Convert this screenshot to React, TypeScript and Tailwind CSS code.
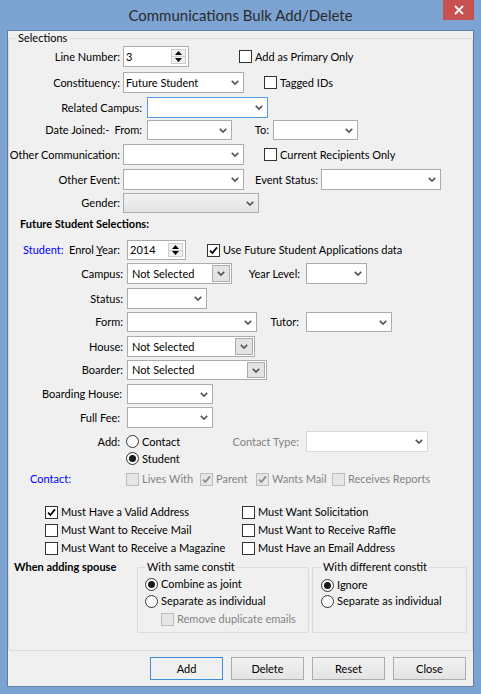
import React from 'react';

type Kind = 'plain' | 'focus' | 'button' | 'inner' | 'disabled';

function Chevron() {
  return (
    <svg width="8" height="5" viewBox="0 0 8 5" className="block">
      <path d="M0.8 0.8 L4 4 L7.2 0.8" fill="none" stroke="#555555" strokeWidth="1.7" />
    </svg>
  );
}

function Label({ cls, children }: { cls: string; children: React.ReactNode }) {
  return <span className={`flex justify-end whitespace-nowrap shrink-0 ${cls}`}>{children}</span>;
}

function Combo({ cls, value = '', kind = 'plain' }: { cls: string; value?: string; kind?: Kind }) {
  const border = kind === 'focus' ? 'border-[#569de5]' : kind === 'disabled' ? 'border-[#d9d9d9]' : 'border-[#acacac]';
  const bg = kind === 'button' ? 'bg-linear-to-b from-[#f2f2f2] to-[#e3e3e3]' : 'bg-white';
  return (
    <div className={`flex items-center shrink-0 border ${border} ${bg} ${cls}`}>
      <span className={`flex-1 truncate ${kind === 'inner' ? 'pl-[4px]' : 'pl-[2px]'}`}>{value}</span>
      {kind === 'inner' ? (
        <span className="w-[18px] self-stretch my-[1px] mr-[1px] bg-[#e3e3e3] border border-[#acacac] flex items-center justify-center">
          <Chevron />
        </span>
      ) : (
        <span className="mr-[4px] flex">
          <Chevron />
        </span>
      )}
    </div>
  );
}

function Spin({ cls, value }: { cls: string; value: string }) {
  return (
    <div className={`flex items-stretch shrink-0 bg-white border border-[#acacac] ${cls}`}>
      <span className="flex-1 pl-[2px] flex items-center">{value}</span>
      <div className="w-[15px] my-[2px] mr-[2px] flex flex-col border border-[#cfcfcf] bg-[#f0f0f0]">
        <span className="flex-1 flex items-center justify-center border-b border-[#cfcfcf]">
          <svg width="7" height="4" viewBox="0 0 7 4" className="block"><path d="M3.5 0 L7 4 L0 4 Z" fill="#000" /></svg>
        </span>
        <span className="flex-1 flex items-center justify-center">
          <svg width="7" height="4" viewBox="0 0 7 4" className="block"><path d="M0 0 L7 0 L3.5 4 Z" fill="#000" /></svg>
        </span>
      </div>
    </div>
  );
}

function Check({ checked, disabled }: { checked?: boolean; disabled?: boolean }) {
  return (
    <span className={`w-[13px] h-[13px] border flex items-center justify-center shrink-0 ${disabled ? 'border-[#bcbcbc] bg-[#e6e6e6]' : 'border-[#333333] bg-white'}`}>
      {checked && (
        <svg width="9" height="9" viewBox="0 0 9 9" className="block">
          <path d="M1 4.6 L3.4 7 L8 1.4" fill="none" stroke={disabled ? '#8a8a8a' : '#000'} strokeWidth="1.7" />
        </svg>
      )}
    </span>
  );
}

function CheckLabel({ label, checked, disabled, cls = '' }: { label: string; checked?: boolean; disabled?: boolean; cls?: string }) {
  return (
    <div className={`flex items-center shrink-0 ${cls}`}>
      <Check checked={checked} disabled={disabled} />
      <span className={`ml-[3px] whitespace-nowrap ${disabled ? 'text-[#838383]' : ''}`}>{label}</span>
    </div>
  );
}

function Radio({ label, checked, cls = '' }: { label: string; checked?: boolean; cls?: string }) {
  return (
    <div className={`flex items-center shrink-0 ${cls}`}>
      <span className="w-[13px] h-[13px] rounded-full border border-[#333333] bg-white flex items-center justify-center shrink-0">
        {checked && <span className="w-[7px] h-[7px] rounded-full bg-[#1a1a1a]" />}
      </span>
      <span className="ml-[3px] whitespace-nowrap">{label}</span>
    </div>
  );
}

function Btn({ label, def }: { label: string; def?: boolean }) {
  return (
    <button className={`w-[73px] h-[23px] border ${def ? 'border-[#3d8fdc] bg-[#f0f0f0]' : 'border-[#acacac] bg-linear-to-b from-[#f2f2f2] to-[#e3e3e3]'}`}>
      {label}
    </button>
  );
}

export default function App() {
  return (
    <div className="w-[481px] h-[694px] bg-[#7ca3d2] px-[7px] pb-[7px] flex flex-col font-['Lato',sans-serif] text-[11px] leading-[14px] text-black">
      <div className="relative h-[30px] flex items-center justify-center shrink-0">
        <span className="text-[15px] text-[#2b2b2b]">Communications Bulk Add/Delete</span>
        <span className="absolute right-0 top-0 w-[31px] h-[20px] bg-[#c75050] flex items-center justify-center">
          <svg width="10" height="10" viewBox="0 0 10 10" className="block">
            <path d="M1 1 L9 9 M9 1 L1 9" stroke="#fff" strokeWidth="1.8" />
          </svg>
        </span>
      </div>

      <div className="flex-1 border border-[#5d7fa9] bg-[#f0f0f0] flex flex-col">
        <fieldset className="w-[465px] h-[620px] pl-[1px] border border-[#dcdcdc] rounded-[2px]">
          <legend className="ml-[6px] px-[2px] leading-[14px]">Selections</legend>

          <div className="flex items-center h-[21px] mt-[1px]">
            <Label cls="w-[110px]">Line Number:</Label>
            <Spin cls="ml-[3px] w-[66px] h-[21px]" value="3" />
            <CheckLabel cls="ml-[50px]" label="Add as Primary Only" />
          </div>

          <div className="flex items-center h-[21px] mt-[5px]">
            <Label cls="w-[110px]">Constituency:</Label>
            <Combo cls="ml-[3px] w-[121px] h-[21px]" value="Future Student" />
            <CheckLabel cls="ml-[20px]" label="Tagged IDs" />
          </div>

          <div className="flex items-center h-[21px] mt-[4px]">
            <Label cls="w-[132px]">Related Campus:</Label>
            <Combo cls="ml-[5px] w-[121px] h-[21px]" kind="focus" />
          </div>

          <div className="flex items-center h-[20px] mt-[2px]">
            <Label cls="w-[132px]">
              <span>Date Joined:-</span>
              <span className="ml-[5px]">From:</span>
            </Label>
            <Combo cls="ml-[5px] w-[85px] h-[20px]" />
            <Label cls="w-[37px]">To:</Label>
            <Combo cls="ml-[4px] w-[85px] h-[20px]" />
          </div>

          <div className="flex items-center h-[21px] mt-[4px]">
            <Label cls="w-[110px]">Other Communication:</Label>
            <Combo cls="ml-[3px] w-[121px] h-[21px]" />
            <CheckLabel cls="ml-[20px]" label="Current Recipients Only" />
          </div>

          <div className="flex items-center h-[21px] mt-[4px]">
            <Label cls="w-[110px]">Other Event:</Label>
            <Combo cls="ml-[3px] w-[121px] h-[21px]" />
            <Label cls="w-[74px]">Event Status:</Label>
            <Combo cls="ml-[3px] w-[120px] h-[21px]" />
          </div>

          <div className="flex items-center h-[20px] mt-[3px]">
            <Label cls="w-[110px]">Gender:</Label>
            <Combo cls="ml-[3px] w-[136px] h-[20px]" kind="button" />
          </div>

          <div className="mt-[4px] ml-[10px] font-bold">Future Student Selections:</div>

          <div className="flex items-center h-[20px] mt-[9px]">
            <span className="w-[110px] pl-[13px] flex justify-between whitespace-nowrap shrink-0">
              <span className="text-[#0000ff]">Student:</span>
              <span>
                Enrol <span className="underline">Y</span>ear:
              </span>
            </span>
            <Spin cls="ml-[7px] w-[59px] h-[20px]" value="2014" />
            <CheckLabel cls="ml-[21px]" label="Use Future Student Applications data" checked />
          </div>

          <div className="flex items-center h-[21px] mt-[3px]">
            <Label cls="w-[113px]">Campus:</Label>
            <Combo cls="ml-[4px] w-[105px] h-[21px]" kind="inner" value="Not Selected" />
            <Label cls="w-[68px]">Year Level:</Label>
            <Combo cls="ml-[6px] w-[61px] h-[21px]" />
          </div>

          <div className="flex items-center h-[21px] mt-[4px]">
            <Label cls="w-[113px]">Status:</Label>
            <Combo cls="ml-[4px] w-[80px] h-[21px]" />
          </div>

          <div className="flex items-center h-[20px] mt-[3px]">
            <Label cls="w-[113px]">Form:</Label>
            <Combo cls="ml-[4px] w-[130px] h-[20px]" />
            <Label cls="w-[42px]">Tutor:</Label>
            <Combo cls="ml-[7px] w-[86px] h-[20px]" />
          </div>

          <div className="flex items-center h-[21px] mt-[4px]">
            <Label cls="w-[113px]">House:</Label>
            <Combo cls="ml-[4px] w-[128px] h-[21px]" kind="inner" value="Not Selected" />
          </div>

          <div className="flex items-center h-[20px] mt-[3px]">
            <Label cls="w-[113px]">Boarder:</Label>
            <Combo cls="ml-[4px] w-[140px] h-[20px]" kind="inner" value="Not Selected" />
          </div>

          <div className="flex items-center h-[20px] mt-[4px]">
            <Label cls="w-[112px]">Boarding House:</Label>
            <Combo cls="ml-[5px] w-[86px] h-[20px]" />
          </div>

          <div className="flex items-center h-[21px] mt-[3px]">
            <Label cls="w-[110px]">Full Fee:</Label>
            <Combo cls="ml-[7px] w-[86px] h-[21px]" />
          </div>

          <div className="flex items-center h-[21px] mt-[3px]">
            <Label cls="w-[110px]">Add:</Label>
            <Radio cls="ml-[6px] w-[105px]" label="Contact" />
            <Label cls="w-[68px] text-[#838383]">Contact Type:</Label>
            <Combo cls="ml-[7px] w-[122px] h-[21px]" kind="disabled" />
          </div>

          <div className="flex items-center h-[13px]">
            <Radio cls="ml-[116px]" label="Student" checked />
          </div>

          <div className="flex items-center h-[16px] mt-[6px]">
            <span className="w-[116px] pl-[20px] text-[#0000ff] shrink-0">Contact:</span>
            <CheckLabel cls="w-[74px]" label="Lives With" disabled />
            <CheckLabel cls="w-[56px]" label="Parent" checked disabled />
            <CheckLabel cls="w-[76px]" label="Wants Mail" checked disabled />
            <CheckLabel label="Receives Reports" disabled />
          </div>

          <div className="flex items-center h-[16px] mt-[17px] pl-[35px]">
            <CheckLabel cls="w-[197px]" label="Must Have a Valid Address" checked />
            <CheckLabel label="Must Want Solicitation" />
          </div>
          <div className="flex items-center h-[16px] mt-[2px] pl-[35px]">
            <CheckLabel cls="w-[197px]" label="Must Want to Receive Mail" />
            <CheckLabel label="Must Want to Receive Raffle" />
          </div>
          <div className="flex items-center h-[16px] mt-[2px] pl-[35px]">
            <CheckLabel cls="w-[197px]" label="Must Want to Receive a Magazine" />
            <CheckLabel label="Must Have an Email Address" />
          </div>

          <div className="flex items-start mt-[4px]">
            <span className="w-[127px] pl-[4px] font-bold whitespace-nowrap shrink-0">When adding spouse</span>
            <fieldset className="w-[172px] h-[73px] border border-[#dcdcdc] rounded-[2px]">
              <legend className="ml-[7px] px-[2px] leading-[14px]">With same constit</legend>
              <Radio cls="h-[16px] mt-[2px] pl-[7px]" label="Combine as joint" checked />
              <Radio cls="h-[16px] mt-[1px] pl-[7px]" label="Separate as individual" />
              <CheckLabel cls="h-[16px] mt-[2px] pl-[23px]" label="Remove duplicate emails" disabled />
            </fieldset>
            <fieldset className="ml-[3px] w-[155px] h-[73px] border border-[#dcdcdc] rounded-[2px]">
              <legend className="ml-[8px] px-[2px] leading-[14px]">With different constit</legend>
              <Radio cls="h-[16px] mt-[3px] pl-[8px]" label="Ignore" checked />
              <Radio cls="h-[16px] pl-[8px]" label="Separate as individual" />
            </fieldset>
          </div>
        </fieldset>

        <div className="flex justify-end gap-[8px] pr-[7px] mt-[6px]">
          <Btn label="Add" def />
          <Btn label="Delete" />
          <Btn label="Reset" />
          <Btn label="Close" />
        </div>
      </div>
    </div>
  );
}
